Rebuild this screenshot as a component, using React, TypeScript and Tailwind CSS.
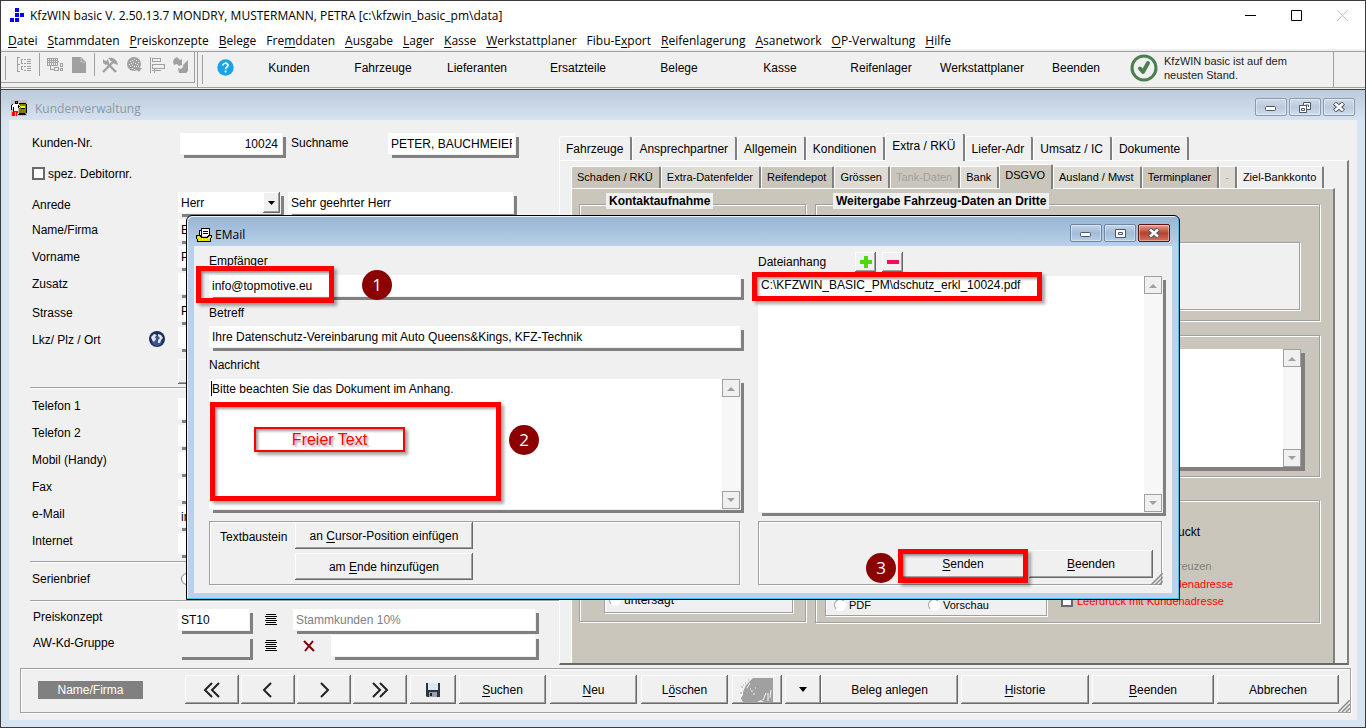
import type { ReactNode } from "react";
import clsx from "clsx";

const RAISED =
  "bg-[#f0f0f0] shadow-[inset_-1px_-1px_#696969,inset_1px_1px_#fff,inset_-2px_-2px_#a0a0a0]";
const ETCHED =
  "border border-[#a0a0a0] shadow-[1px_1px_#fff,inset_1px_1px_#fff]";
const DROP = "shadow-[1px_1px_0_#f0f0f0,4px_4px_0_#808080]";

const MENU = [
  "&Datei",
  "&Stammdaten",
  "&Preiskonzepte",
  "&Belege",
  "Fre&mddaten",
  "&Ausgabe",
  "&Lager",
  "&Kasse",
  "&Werkstattplaner",
  "Fibu-E&xport",
  "&Reifenlagerung",
  "&Asanetwork",
  "&OP-Verwaltung",
  "&Hilfe",
];

const TOOLS = [
  { label: "Kunden", width: "w-[94px]" },
  { label: "Fahrzeuge", width: "w-[94px]" },
  { label: "Lieferanten", width: "w-[94px]" },
  { label: "Ersatzteile", width: "w-[108px]" },
  { label: "Belege", width: "w-[94px]" },
  { label: "Kasse", width: "w-[108px]" },
  { label: "Reifenlager", width: "w-[94px]" },
  { label: "Werkstattplaner", width: "w-[108px]" },
  { label: "Beenden", width: "w-[80px]" },
];

const TABS = [
  "Fahrzeuge",
  "Ansprechpartner",
  "Allgemein",
  "Konditionen",
  "Extra / RKÜ",
  "Liefer-Adr",
  "Umsatz / IC",
  "Dokumente",
];

const SUB_TABS = [
  { label: "Schaden / RKÜ", tone: "bg-[#cbc6bb]" },
  { label: "Extra-Datenfelder", tone: "bg-[#dedbd5]" },
  { label: "Reifendepot", tone: "bg-[#cbc6bb]" },
  { label: "Grössen", tone: "bg-[#dedbd5]" },
  { label: "Tank-Daten", tone: "bg-[#cbc6bb] text-[#a0a0a0]" },
  { label: "Bank", tone: "bg-[#dedbd5]" },
  { label: "DSGVO", tone: "bg-[#cbc6bb]" },
  { label: "Ausland / Mwst", tone: "bg-[#dedbd5]" },
  { label: "Terminplaner", tone: "bg-[#cbc6bb]" },
  { label: "-", tone: "bg-[#dedbd5] text-[#a0a0a0]" },
  { label: "Ziel-Bankkonto", tone: "bg-[#f0f0f0]" },
];

// "&" marks the access key, as in the menu resources
function Mnemonic({ text }: { text: string }) {
  const at = text.indexOf("&");
  if (at < 0) return <>{text}</>;
  return (
    <span>
      {text.slice(0, at)}
      <u className="underline-offset-2">{text[at + 1]}</u>
      {text.slice(at + 2)}
    </span>
  );
}

function PushButton({
  className,
  label,
  children,
}: {
  className?: string;
  label?: string;
  children: ReactNode;
}) {
  return (
    <button
      type="button"
      aria-label={label}
      className={clsx(
        RAISED,
        "flex shrink-0 items-center justify-center text-[12px] whitespace-nowrap",
        className
      )}
    >
      {children}
    </button>
  );
}

function Field({
  id,
  value = "",
  label,
  className,
}: {
  id?: string;
  value?: string;
  label?: string;
  className?: string;
}) {
  return (
    <input
      id={id}
      aria-label={label}
      defaultValue={value}
      className={clsx(
        "h-[21px] min-w-0 rounded-none px-[3px] text-[12px] outline-none",
        DROP,
        className
      )}
    />
  );
}

function FormRow({
  id,
  label,
  value,
  icon,
  lead = "leading-[22px]",
}: {
  id: string;
  label: string;
  value?: string;
  icon?: ReactNode;
  lead?: string;
}) {
  return (
    <div className="flex h-[27px] items-start">
      <label htmlFor={id} className={clsx("w-[117px]", lead)}>
        {label}
      </label>
      <div className="w-[29px] pt-1">{icon}</div>
      <Field id={id} value={value} className="w-[335px] bg-white" />
    </div>
  );
}

function Rule() {
  return <hr className="-ml-[2px] h-[2px] border-t border-[#a0a0a0] bg-white" />;
}

function ScrollBar() {
  return (
    <div className="flex w-[18px] shrink-0 flex-col justify-between bg-[#f7f7f7]">
      {[true, false].map((up) => (
        <button
          key={String(up)}
          type="button"
          aria-label={up ? "Nach oben" : "Nach unten"}
          className="flex h-[18px] items-center justify-center border border-[#a0a0a0] bg-[#f0f0f0]"
        >
          <svg width="8" height="5" viewBox="0 0 8 5">
            <path d={up ? "M0 5 4 1 8 5z" : "M0 0 4 4 8 0z"} fill="#a0a0a0" />
          </svg>
        </button>
      ))}
    </div>
  );
}

function Grip({ className }: { className?: string }) {
  return (
    <svg className={className} width="12" height="12" viewBox="0 0 12 12">
      <path
        d="M0 12 12 0M4 12 12 4M8 12 12 8"
        stroke="#8a8a8a"
        strokeWidth="1.5"
      />
    </svg>
  );
}

function Marker({ n, className }: { n: number; className: string }) {
  return (
    <span
      className={clsx(
        "absolute flex size-[30px] items-center justify-center rounded-full bg-[#8b0000] font-['Open_Sans',sans-serif] text-[17px] text-white",
        className
      )}
    >
      {n}
    </span>
  );
}

function RedFrame({ className }: { className: string }) {
  return (
    <span
      className={clsx(
        "pointer-events-none absolute border-5 border-[#f00] shadow-[3px_3px_3px_rgba(0,0,0,0.35),inset_2px_2px_3px_rgba(0,0,0,0.4)]",
        className
      )}
    />
  );
}

function ToolIcons() {
  return (
    <div className="flex items-start pt-[5px] text-[#a0a0a0]">
      <svg width="15" height="15" viewBox="0 0 15 15" shapeRendering="crispEdges" className="mr-[8px] ml-[10px]">
        <g fill="none" stroke="currentColor">
          <path d="M4 .5H1.500V14.500H4M7 2.500H5.500V6H7M7 9.500H5.500V12.500H7M2 7.500H4M8 2.500H10M11 2.500H15M11 4.500H15M8 6.500H10M11 6.500H15M8 9.500H10M11 9.500H15M11 11.500H15M8 13.500H10M11 13.500H15" />
        </g>
      </svg>
      <span className="-mt-1 mr-[7px] h-[23px] w-px bg-[#a0a0a0]" />
      <svg width="17" height="15" viewBox="0 0 17 15" shapeRendering="crispEdges" className="mr-[8px]">
        <g fill="none" stroke="currentColor">
          <path d="M.5 1.500H10.500V8.500H.5zM0 3.500H11M0 5.500H11M2.500 1V9M4.500 1V9M6.500 1V9M8.500 1V9M3.500 9V12.500H7M11 4.500H12" />
          <path d="M7.500 10.500H11.500V13.500H7.500zM13.500 6.500H15.500V9.500H13.500zM13.500 11.500H15.500V13.500H13.500z" />
        </g>
      </svg>
      <svg width="14" height="16" viewBox="0 0 14 16" className="mr-[8px]">
        <path d="M0 0H9L14 5V16H0z" fill="currentColor" />
        <path d="M9 1V5H13" stroke="#c8c8c8" fill="none" />
      </svg>
      <span className="-mt-1 mr-[7px] h-[23px] w-px bg-[#a0a0a0]" />
      <svg width="17" height="16" viewBox="0 0 17 16" className="mr-[8px]">
        <path d="M1 15 12 4M3 4 14 15" stroke="currentColor" strokeWidth="2.400" />
        <path
          d="M6 1C11 0 15 2 16 8L13 7 10 5zM1 2 1 6 4 8 7 6 6 2 4 5z"
          fill="currentColor"
        />
      </svg>
      <svg width="15" height="15" viewBox="0 0 15 15" className="mr-[8px]">
        <circle cx="7" cy="7" r="7" fill="currentColor" />
        <path
          d="M3 4.500H4M5 3.500H6M7 2.500H8M9 3.500H10M11 5.500H12M2 7.500H3M4 6.500H5M6 5.500H7M8 6.500H9M10 7.500H11M3 9.500H4M5 8.500H6M7 9.500H8M9 9.500H10M5 11.500H6M7 12.500H8M11 9.500H12"
          stroke="#f0f0f0"
        />
        <path d="M8 11 15 11 12 15z" fill="currentColor" />
      </svg>
      <svg width="15" height="16" viewBox="0 0 15 16" shapeRendering="crispEdges" className="mr-[8px]">
        <path
          d="M.5 0V16M2.500 1.500H10.500V4.500H2.500zM2.500 7.500H14.500V11.500H2.500zM2 13.500H11M4.500 12V16"
          stroke="currentColor"
          fill="none"
        />
      </svg>
      <svg width="16" height="16" viewBox="0 0 16 16">
        <path
          d="M1 2 4 0 7 3 9 2V8L6 9 4 7 1 8 0 5zM10 8 15 3V14L13 16H6L5 11 8 12 10 10z"
          fill="currentColor"
        />
      </svg>
    </div>
  );
}

function TitleBar() {
  return (
    <header className="flex h-[30px] items-start bg-white pl-[9px] text-[12px]">
      <svg width="15" height="15" viewBox="0 0 15 15" className="mt-[7px]">
        <path
          d="M5 0h4v4H5zM5 5h4v4H5zM10 5h4v4h-4zM0 10h4v4H0zM5 10h4v4H5z"
          fill="#00f"
        />
      </svg>
      <h1 className="ml-[5px] flex-1 font-['Open_Sans','Noto_Sans',sans-serif] leading-[29px]">
        KfzWIN basic V. 2.50.13.7 MONDRY, MUSTERMANN, PETRA
        [c:\kfzwin_basic_pm\data]
      </h1>
      <button type="button" aria-label="Minimieren" className="flex h-[29px] w-[46px] items-center justify-center">
        <svg width="11" height="11"><path d="M0 5.500H11" stroke="#000" /></svg>
      </button>
      <button type="button" aria-label="Maximieren" className="flex h-[29px] w-[46px] items-center justify-center">
        <svg width="11" height="11"><path d="M.5 .5H10.500V10.500H.5z" stroke="#000" fill="none" /></svg>
      </button>
      <button type="button" aria-label="Schließen" className="flex h-[29px] w-[46px] items-center justify-center">
        <svg width="11" height="11"><path d="M0 0 11 11M11 0 0 11" stroke="#c4c4c4" /></svg>
      </button>
    </header>
  );
}

function CaptionButtons({ modal }: { modal?: boolean }) {
  const tone = modal
    ? "border-[#6d87a8] bg-linear-to-b from-[#c4d6ea] via-[#a3bbd6] to-[#b6cee8]"
    : "border-[#8a9bb0] bg-linear-to-b from-[#d0dbe8] via-[#bccbdc] to-[#cfdeee]";
  const base =
    "flex h-[18px] w-8 items-center justify-center rounded-[2px] border shadow-[inset_0_0_0_1px_rgba(255,255,255,0.4)]";
  return (
    <div className="flex gap-[2px]">
      <button type="button" aria-label="Minimieren" className={clsx(base, tone)}>
        <svg width="12" height="10">
          <rect x=".5" y="4.500" width="10" height="4" rx="1" fill="#fff" stroke="#4a5568" />
        </svg>
      </button>
      <button type="button" aria-label={modal ? "Maximieren" : "Verkleinern"} className={clsx(base, tone)}>
        {modal ? (
          <svg width="11" height="9">
            <path d="M.5 .5H10.500V8.500H.5zM3.500 3.500H7.500V5.500H3.500z" fill="#fff" stroke="#4a5568" />
          </svg>
        ) : (
          <svg width="12" height="11">
            <path d="M4.500 .5H11.500V7.500H4.500z" fill="#fff" stroke="#4a5568" />
            <path d="M6.500 3H9.500V5" fill="none" stroke="#4a5568" />
            <path d="M.5 3.500H7.500V10.500H.5z" fill="#fff" stroke="#4a5568" />
            <path d="M2.500 6.500H5.500V8.500H2.500z" fill="#fff" stroke="#4a5568" />
          </svg>
        )}
      </button>
      <button
        type="button"
        aria-label="Schließen"
        className={clsx(
          base,
          modal
            ? "border-[#5c1410] bg-linear-to-b from-[#e5a093] via-[#b8402a] to-[#d07060]"
            : tone
        )}
      >
        <svg width="12" height="10" viewBox="0 0 12 10">
          <path d="M1.500 1 10.500 9M10.500 1 1.500 9" stroke="#4a5568" strokeWidth="4.500" />
          <path d="M2 1.500 10 8.500M10 1.500 2 8.500" stroke="#fff" strokeWidth="2.500" />
        </svg>
      </button>
    </div>
  );
}

function CustomerForm() {
  return (
    <form className="w-[550px] shrink-0 pt-[13px] pl-[23px]">
      <div className="flex h-[27px] items-start leading-5">
        <label htmlFor="nr" className="w-[148px]">Kunden-Nr.</label>
        <Field id="nr" value="10024" className="w-[102px] bg-white pr-1 text-right" />
        <label htmlFor="such" className="ml-[9px] w-[97px]">Suchname</label>
        <Field id="such" value="PETER, BAUCHMEIER" className="w-[127px] bg-white" />
      </div>
      <label className="mb-[5px] flex h-[27px] items-center gap-[3px]">
        <input type="checkbox" className="size-[13px] appearance-none border-2 border-[#696969] bg-white" />
        spez. Debitornr.
      </label>
      <div className="flex h-[27px] items-start">
        <label htmlFor="anrede" className="w-[146px] leading-[26px]">Anrede</label>
        <div className={clsx("relative h-[21px] w-[102px] bg-white", DROP)}>
          <select id="anrede" className="h-[21px] w-full appearance-none pl-[3px] text-[12px] outline-none">
            <option>Herr</option>
          </select>
          <span className={clsx(RAISED, "pointer-events-none absolute top-0 right-0 flex h-[21px] w-[17px] items-center justify-center")}>
            <svg width="7" height="4"><path d="M0 0H7L3.500 4z" /></svg>
          </span>
        </div>
        <Field label="Briefanrede" value="Sehr geehrter Herr" className="ml-2 w-[225px] bg-white" />
      </div>
      <FormRow id="name" label="Name/Firma" value="BAUCHMEIER" />
      <FormRow id="vorname" label="Vorname" value="PETER" />
      <FormRow id="zusatz" label="Zusatz" />
      <FormRow id="strasse" label="Strasse" value="P" lead="leading-[26px]" />
      <FormRow
        id="ort"
        label="Lkz/ Plz / Ort"
        lead="leading-[26px]"
        icon={
          <svg width="16" height="16" viewBox="0 0 16 16">
            <circle cx="8" cy="8" r="8" fill="#1f2f5c" />
            <circle cx="8" cy="10" r="5" fill="#3d5488" />
            <path
              d="M2 6 5 3 8 4 6 6 7 8 5 11 3 9zM9 3 12 4 14 7 12 9 11 12 9 12 9 9 11 7 9 5z"
              fill="#dfe6f2"
            />
          </svg>
        }
      />
      <div className="mt-[5px] mb-[3px] h-[25px] pl-[146px]">
        <PushButton label="Ort suchen" className="h-[25px] w-[80px]">{""}</PushButton>
      </div>
      <Rule />
      <div className="h-[9px]" />
      <FormRow id="tel1" label="Telefon 1" lead="leading-4" />
      <FormRow id="tel2" label="Telefon 2" lead="leading-4" />
      <FormRow id="mobil" label="Mobil (Handy)" lead="leading-4" />
      <FormRow id="fax" label="Fax" lead="leading-4" />
      <FormRow id="mail" label="e-Mail" value="info@topmotive.eu" lead="leading-4" />
      <FormRow id="web" label="Internet" lead="leading-4" />
      <div className="mt-px">
        <Rule />
      </div>
      <div className="flex h-[37px] items-center pb-[5px]">
        <label htmlFor="serie" className="w-[149px]">Serienbrief</label>
        <input id="serie" type="radio" className="size-3 appearance-none rounded-full border border-[#808080] bg-white" />
      </div>
      <Rule />
      <div className="mt-[7px] flex h-[26px] items-start">
        <label htmlFor="preis" className="w-[146px] pl-px leading-4">Preiskonzept</label>
        <Field id="preis" value="ST10" className="w-[71px] bg-white" />
        <ListButton label="Preiskonzept wählen" />
        <Field label="Preiskonzept Name" value="Stammkunden 10%" className="ml-4 w-[242px] bg-white text-[#808080]" />
      </div>
      <div className="flex h-[26px] items-start">
        <label htmlFor="gruppe" className="w-[146px] pl-px leading-4">AW-Kd-Gruppe</label>
        <Field id="gruppe" className="w-[71px] bg-[#f0f0f0]" />
        <ListButton label="Gruppe wählen" />
        <button type="button" aria-label="Gruppe löschen" className="mt-[5px] ml-[26px]">
          <svg width="12" height="12" viewBox="0 0 12 12">
            <path d="M1 1 11 11M10 1 2 11" stroke="#800000" strokeWidth="2" fill="none" />
          </svg>
        </button>
        <Field label="Gruppe Name" className="ml-4 w-[204px] bg-white" />
      </div>
    </form>
  );
}

function ListButton({ label }: { label: string }) {
  return (
    <button type="button" aria-label={label} className="mt-[5px] ml-4">
      <svg width="12" height="12" shapeRendering="crispEdges">
        <path d="M1 .5H11M0 2.500H12M1 4.500H11M0 6.500H12M1 8.500H11M0 10.500H12" stroke="#000" />
      </svg>
    </button>
  );
}

function Group({
  title,
  titleClass,
  className,
  children,
}: {
  title?: string;
  titleClass?: string;
  className?: string;
  children?: ReactNode;
}) {
  return (
    <section className={clsx("relative", ETCHED, className)}>
      {title && (
        <h2
          className={clsx(
            "absolute -top-3 bg-[#f0f0f0] px-[3px] text-[12px] leading-4 font-bold whitespace-nowrap",
            titleClass
          )}
        >
          {title}
        </h2>
      )}
      {children}
    </section>
  );
}

function Radio({ label, className }: { label: string; className?: string }) {
  return (
    <label className={clsx("flex items-center gap-[3px]", className)}>
      <input
        type="radio"
        name="ausgabe"
        className="size-3 appearance-none rounded-full border border-[#a0a0a0] border-r-white border-b-white bg-white"
      />
      {label}
    </label>
  );
}

function TabPages() {
  return (
    <div className="mr-2 flex min-w-0 flex-1 flex-col pt-3">
      <div role="tablist" className="flex h-7 items-end">
        {TABS.map((tab) => {
          const active = tab === "Extra / RKÜ";
          return (
            <button
              key={tab}
              type="button"
              role="tab"
              aria-selected={active}
              className={clsx(
                "rounded-t-[3px] border-t border-r-2 border-l border-t-white border-r-[#808080] border-l-white bg-[#f0f0f0] pr-[7px] pl-[6px] text-[12px] whitespace-nowrap",
                active ? "relative top-px h-7 pb-[3px]" : "h-6"
              )}
            >
              {tab}
            </button>
          );
        })}
      </div>
      <div className="flex flex-1 flex-col border-t border-r-2 border-b-2 border-l border-t-white border-r-[#808080] border-b-[#696969] border-l-white pt-[3px] pr-3 pl-[11px]">
        <div role="tablist" className="flex h-6 items-end">
          {SUB_TABS.map(({ label, tone }) => {
            const active = label === "DSGVO";
            return (
              <button
                key={label}
                type="button"
                role="tab"
                aria-selected={active}
                className={clsx(
                  "rounded-t-[2px] border-t border-r-2 border-l border-t-white border-r-[#808080] border-l-white pr-[6px] pl-[5px] text-[11px] whitespace-nowrap",
                  tone,
                  active ? "relative top-px h-[25px] pb-[3px]" : "h-[22px]"
                )}
              >
                {label}
              </button>
            );
          })}
        </div>
        <div className="grid flex-1 grid-cols-[227px_1fr] items-start gap-[9px] border-t border-r-2 border-l border-t-white border-r-[#808080] border-l-white bg-[#cbc6bb] pt-[15px] pr-[13px] pb-10 pl-[7px]">
          <Group
            title="Kontaktaufnahme"
            titleClass="left-[26px]"
            className="flex h-[418px] flex-col justify-end pr-3 pb-2 pl-6"
          >
            <div className={clsx("flex h-[60px] items-end bg-[#f0f0f0] pb-[3px] pl-1", ETCHED)}>
              <Radio label="untersagt" className="text-[12px]" />
            </div>
          </Group>
          <div className="flex flex-col">
            <Group
              title="Weitergabe Fahrzeug-Daten an Dritte"
              titleClass="left-[17px]"
              className="h-[117px] pt-[37px] pr-[19px] pl-2"
            >
              <div className={clsx("h-[68px] bg-[#f0f0f0]", ETCHED)} />
            </Group>
            <Group className="mt-[14px] h-[142px] pt-[13px] pr-[18px] pl-2">
              <div className="flex h-[118px] bg-white shadow-[4px_4px_0_#808080]">
                <div className="flex-1" />
                <ScrollBar />
              </div>
            </Group>
            <Group className="mt-[23px] flex h-[123px] justify-between pb-[6px] pl-[9px]">
              <div className={clsx("flex h-[60px] w-[222px] items-end gap-[57px] self-end bg-[#f0f0f0] pb-[2px] pl-2", ETCHED)}>
                <Radio label="PDF" className="text-[11px]" />
                <Radio label="Vorschau" className="text-[11px]" />
              </div>
              <div className="flex w-[258px] flex-col pt-[22px]">
                <p className="pl-[93px] text-[12px] leading-[18px]">gedruckt</p>
                <p className="mt-4 pl-[99px] text-[11px] leading-[18px] text-[#808080]">ankreuzen</p>
                <p className="pl-[95px] text-[11px] leading-[18px] text-[#f00]">Kundenadresse</p>
                <label className="flex items-center gap-1 text-[11px] leading-4 whitespace-nowrap text-[#f00]">
                  <input type="checkbox" className="size-3 appearance-none border-2 border-[#696969] bg-white" />
                  Leerdruck mit Kundenadresse
                </label>
              </div>
            </Group>
          </div>
        </div>
      </div>
    </div>
  );
}

function BottomBar() {
  return (
    <footer className={clsx("relative mr-[6px] mb-[7px] ml-[11px] flex h-[45px] items-start border-[#808080] pt-[6px] pl-[17px]", ETCHED)}>
      <span className="mt-[6px] mr-[42px] w-[107px] bg-[#808080] text-center leading-[18px] text-white">
        Name/Firma
      </span>
      <div className="flex gap-[2px]">
        {[
          { label: "Erster", d: "M9 1 2 8 9 15M16 1 9 8 16 15" },
          { label: "Zurück", d: "M12 1 5 8 12 15" },
          { label: "Weiter", d: "M6 1 13 8 6 15" },
          { label: "Letzter", d: "M2 1 9 8 2 15M9 1 16 8 9 15" },
        ].map(({ label, d }) => (
          <PushButton key={label} label={label} className="h-[29px] w-[54px]">
            <svg width="18" height="16" viewBox="0 0 18 16">
              <path d={d} fill="none" stroke="#222" strokeWidth="2" />
            </svg>
          </PushButton>
        ))}
      </div>
      <PushButton label="Speichern" className="ml-[3px] h-[29px] w-[46px]">
        <svg width="16" height="16" viewBox="0 0 16 16">
          <path d="M1 1H15V15H2L1 14z" fill="#2d3440" />
          <path d="M3 1H13V8H3z" fill="#dde6ee" />
          <path d="M4 10H12V15H4z" fill="#9aa3ad" />
          <path d="M5 11H7V14H5z" fill="#1c222b" />
        </svg>
      </PushButton>
      <div className="ml-[3px] flex gap-[4px]">
        <PushButton className="h-[29px] w-[87px]"><Mnemonic text="&Suchen" /></PushButton>
        <PushButton className="h-[29px] w-[87px]"><Mnemonic text="&Neu" /></PushButton>
        <PushButton className="h-[29px] w-[87px]"><Mnemonic text="L&öschen" /></PushButton>
      </div>
      <PushButton label="Fahrzeug" className="ml-[4px] h-[29px] w-[50px]">
        <svg width="34" height="24" viewBox="0 0 34 24">
          <path d="M3 14 6 7 11 2 13 0H33V24H24L21 22 17 24H3L1 21 3 16z" fill="#a0a0a0" />
          <path
            d="M10 5 7 10M11 13H13M10 11H11M15 10H16M13 16H15M26 15 23 22M28 15V23M31 12 30 20M1 8H3M0 13H2M1 17H3M3 5H5M6 2H8"
            stroke="#f4f4f4"
          />
          <path d="M1 9H3M0 15H2M5 5H6M1 20H3M3 7H4M8 2H9" stroke="#a0a0a0" />
        </svg>
      </PushButton>
      <PushButton label="Auswahl" className="ml-[3px] h-[29px] w-[36px]">
        <svg width="8" height="5"><path d="M0 0H8L4 5z" /></svg>
      </PushButton>
      <div className="mr-[11px] flex flex-1 gap-[3px]">
        <PushButton className="h-[29px] grow basis-[137px]">Beleg anlegen</PushButton>
        <PushButton className="h-[29px] grow basis-[128px]"><Mnemonic text="&Historie" /></PushButton>
        <PushButton className="h-[29px] grow basis-[122px]"><Mnemonic text="&Beenden" /></PushButton>
        <PushButton className="h-[29px] grow basis-[122px]">Abbrechen</PushButton>
      </div>
      <Grip className="absolute right-0 bottom-0" />
    </footer>
  );
}

function MailDialog() {
  return (
    <section
      role="dialog"
      aria-labelledby="mail-title"
      className="absolute top-[214px] right-[185px] left-[185px] flex h-[385px] flex-col rounded-t-[6px] border border-black bg-linear-to-b from-[#98b4d2] via-[#b9d1ea] via-8% to-[#b9d1ea] px-[7px] pb-[7px] shadow-[inset_-1px_-1px_#3cc8e8,inset_1px_1px_#e8f2fc]"
    >
      <div className="flex h-[30px] shrink-0 items-center gap-[3px] pl-[2px]">
        <svg width="16" height="15" viewBox="0 0 16 15" shapeRendering="crispEdges" className="mt-2">
          <path d="M3.500 8V2.500H5.500V.5H13.500V8" fill="#fff" stroke="#000" />
          <path d="M7 3.500H12M7 5.500H12M5.500 3V8" stroke="#000" />
          <path d="M.5 7.500H4.500L5.500 9.500H11.500L12.500 7.500H15.500L14.500 13.500H1.500z" fill="#e8e000" stroke="#000" />
          <path d="M3 10.500H4M6 11.500H7M9 11.500H10M12 10.500H13M3 12.500H4" stroke="#fff9a0" />
        </svg>
        <h2 id="mail-title" className="mt-2 flex-1 font-['Open_Sans','Noto_Sans',sans-serif] text-[12px] leading-4">
          EMail
        </h2>
        <div className="mt-1 mr-[2px]">
          <CaptionButtons modal />
        </div>
      </div>
      <div className="flex flex-1 gap-[18px] bg-[#f0f0f0] pr-[10px] pb-2 pl-[15px]">
        <div className="flex min-w-0 flex-1 flex-col">
          <label htmlFor="to" className="leading-[30px]">Empfänger</label>
          <div className="relative -mt-px flex">
            <Field id="to" value="info@topmotive.eu" className="flex-1 bg-white" />
            <RedFrame className="-top-[9px] -left-[13px] h-[37px] w-[138px]" />
            <Marker n={1} className="-top-[5px] left-[153px]" />
          </div>
          <label htmlFor="subject" className="mt-1 leading-[26px]">Betreff</label>
          <Field
            id="subject"
            value="Ihre Datenschutz-Vereinbarung mit Auto Queens&Kings, KFZ-Technik"
            className="bg-white"
          />
          <label htmlFor="msg" className="mt-[3px] leading-[30px]">Nachricht</label>
          <div className={clsx("relative -mt-px flex h-[130px] bg-white", DROP)}>
            <textarea
              id="msg"
              defaultValue="Bitte beachten Sie das Dokument im Anhang."
              className="flex-1 resize-none px-[3px] py-[2px] text-[12px] leading-4 outline-none"
            />
            <ScrollBar />
            <span className="absolute top-[2px] left-[2px] h-[15px] w-px bg-black" />
            <RedFrame className="top-[23px] left-px h-[99px] w-[291px]" />
            <span className="absolute top-[48px] left-[45px] flex h-[25px] w-[151px] items-center justify-center border-2 border-[#f00] text-[16px] text-[#f00] shadow-[3px_3px_3px_rgba(0,0,0,0.35),inset_2px_2px_3px_rgba(0,0,0,0.4)] [text-shadow:2px_2px_2px_rgba(0,0,0,0.35)]">
              Freier Text
            </span>
            <Marker n={2} className="top-[46px] left-[300px]" />
          </div>
          <div className={clsx("mt-3 flex h-[64px] pl-[10px]", ETCHED)}>
            <span className="w-[75px] leading-[30px]">Textbaustein</span>
            <div className="flex flex-col gap-1">
              <PushButton className="h-[27px] w-[178px]"><Mnemonic text="an &Cursor-Position einfügen" /></PushButton>
              <PushButton className="h-[27px] w-[178px]"><Mnemonic text="am &Ende hinzufügen" /></PushButton>
            </div>
          </div>
        </div>
        <div className="flex w-[404px] flex-col">
          <div className="flex h-[30px] items-start gap-[6px] pt-[6px]">
            <span className="w-[91px] leading-5">Dateianhang</span>
            <PushButton label="Anhang hinzufügen" className="h-5 w-[21px]">
              <svg width="12" height="12"><path d="M4 0H8V4H12V8H8V12H4V8H0V4H4z" fill="#4fd80c" /></svg>
            </PushButton>
            <PushButton label="Anhang entfernen" className="h-5 w-[21px]">
              <svg width="12" height="4"><path d="M0 0H12V4H0z" fill="#ff0a54" /></svg>
            </PushButton>
          </div>
          <div className={clsx("relative flex h-[236px] bg-white", DROP)}>
            <ul className="flex-1 px-[3px]">
              <li className="leading-[18px]">C:\KFZWIN_BASIC_PM\dschutz_erkl_10024.pdf</li>
            </ul>
            <ScrollBar />
            <RedFrame className="-top-1 -left-[6px] h-[29px] w-[290px]" />
          </div>
          <div className={clsx("relative mt-[9px] flex h-[64px] items-start justify-end gap-1 pt-[28px] pr-2", ETCHED)}>
            <div className="relative">
              <PushButton className="h-[28px] w-[124px]"><Mnemonic text="&Senden" /></PushButton>
              <RedFrame className="-top-[1px] -left-[3px] h-[34px] w-[130px]" />
              <Marker n={3} className="top-[3px] -left-[35px]" />
            </div>
            <PushButton className="h-[28px] w-[124px]"><Mnemonic text="&Beenden" /></PushButton>
            <Grip className="absolute -right-[2px] -bottom-px" />
          </div>
        </div>
      </div>
    </section>
  );
}

function App() {
  return (
    <div className="relative flex min-h-screen flex-col border border-[#3c3c3c] bg-[#f0f0f0] font-['Liberation_Sans',Arial,sans-serif] text-[12px] text-black">
      <TitleBar />
      <nav className="flex h-[18px] items-center gap-[10px] bg-white pt-[2px] pl-[7px] font-['Open_Sans','Noto_Sans',sans-serif] text-[12px] whitespace-nowrap">
        {MENU.map((item) => (
          <a key={item} href="#"><Mnemonic text={item} /></a>
        ))}
      </nav>
      <div className="mt-[2px] flex h-[37px] border-t border-b border-[#a0a0a0]">
        <div className="mr-[2px] h-[31px] w-[194px] border-r border-b border-[#a0a0a0] pl-[4px]">
          <div className="flex">
            <span className="mt-1 h-6 w-px bg-[#a0a0a0]" />
            <ToolIcons />
          </div>
        </div>
        <div className="flex flex-1 items-center border-l border-[#a0a0a0]">
          <span className="ml-1 h-[29px] w-px bg-[#a0a0a0]" />
          <button type="button" aria-label="Hilfe" className="mr-2 -mt-1 ml-[14px]">
            <svg width="17" height="17" viewBox="0 0 17 17">
              <circle cx="8.500" cy="8.500" r="8.200" fill="#17a4e6" />
              <path d="M6 6.500C6 3.500 11 3.500 11 6.300 11 8 8.600 8.200 8.600 10.200" stroke="#fff" strokeWidth="1.700" fill="none" />
              <circle cx="8.600" cy="12.600" r="1.100" fill="#fff" />
            </svg>
          </button>
          {TOOLS.map(({ label, width }) => (
            <button key={label} type="button" className={clsx("-mt-[3px] text-center text-[12px]", width)}>
              {label}
            </button>
          ))}
          <svg width="28" height="28" viewBox="0 0 28 28" className="-mt-[3px] ml-[14px]">
            <circle cx="14" cy="14" r="12" fill="none" stroke="#4c7f50" strokeWidth="3" />
            <path d="M10 14.500 13 18 18 9" fill="none" stroke="#4c7f50" strokeWidth="4" strokeLinejoin="round" strokeLinecap="round" />
          </svg>
          <p className="-mt-[3px] ml-[6px] flex-1 text-[11px] leading-[14px] text-[#222]">
            KfzWIN basic ist auf dem
            <br />
            neusten Stand.
          </p>
          <span className="mr-[31px] h-full w-px bg-[#a0a0a0]" />
        </div>
      </div>
      <main className="mt-px flex flex-1 flex-col border-t border-[#404040] bg-linear-to-b from-[#bccadb] via-[#d7e4f2] via-5% to-[#d7e4f2] px-2 pb-[7px]">
        <div className="flex h-[30px] shrink-0 items-center pl-[2px]">
          <svg width="16" height="16" viewBox="0 0 16 16" shapeRendering="crispEdges" className="mt-[6px]">
            <path d="M0 0H16V16H0z" fill="#c0c0c0" />
            <path d="M8 4H15V15H8z" fill="#808000" />
            <path d="M4 1H7V4H4zM8 3H15V4H8z" fill="#000" />
            <path d="M5 2H6V3H5z" fill="#808000" />
            <path d="M2 4H8L10 7 8 8 7 7V11H2V8L1 10H0L1 5z" fill="#fff" />
            <path d="M0 5H1V10H0zM1 4H2V5H1zM7 5H8V6H9V7H8V8H7zM2 7H3V11H2z" fill="#000" />
            <path d="M2 11H4V16H1V13zM4 11H7V13H6V16H5V12H4z" fill="#f00" />
            <path d="M9 6H14V8H10z" fill="#ff0" />
            <path d="M10 8H14V9H10zM8 13H14V14H8zM7 14H15V15H7zM15 4H16V13H15z" fill="#000" />
          </svg>
          <h2 className="mt-2 ml-2 flex-1 font-['Open_Sans','Noto_Sans',sans-serif] text-[12px] text-[#8e98a3]">
            Kundenverwaltung
          </h2>
          <div className="mt-1 mr-[2px]">
            <CaptionButtons />
          </div>
        </div>
        <div className="flex flex-1 flex-col bg-[#f0f0f0]">
          <div className="flex flex-1">
            <CustomerForm />
            <TabPages />
          </div>
          <div className="h-[3px]" />
          <BottomBar />
        </div>
      </main>
      <MailDialog />
    </div>
  );
}

export default App;
